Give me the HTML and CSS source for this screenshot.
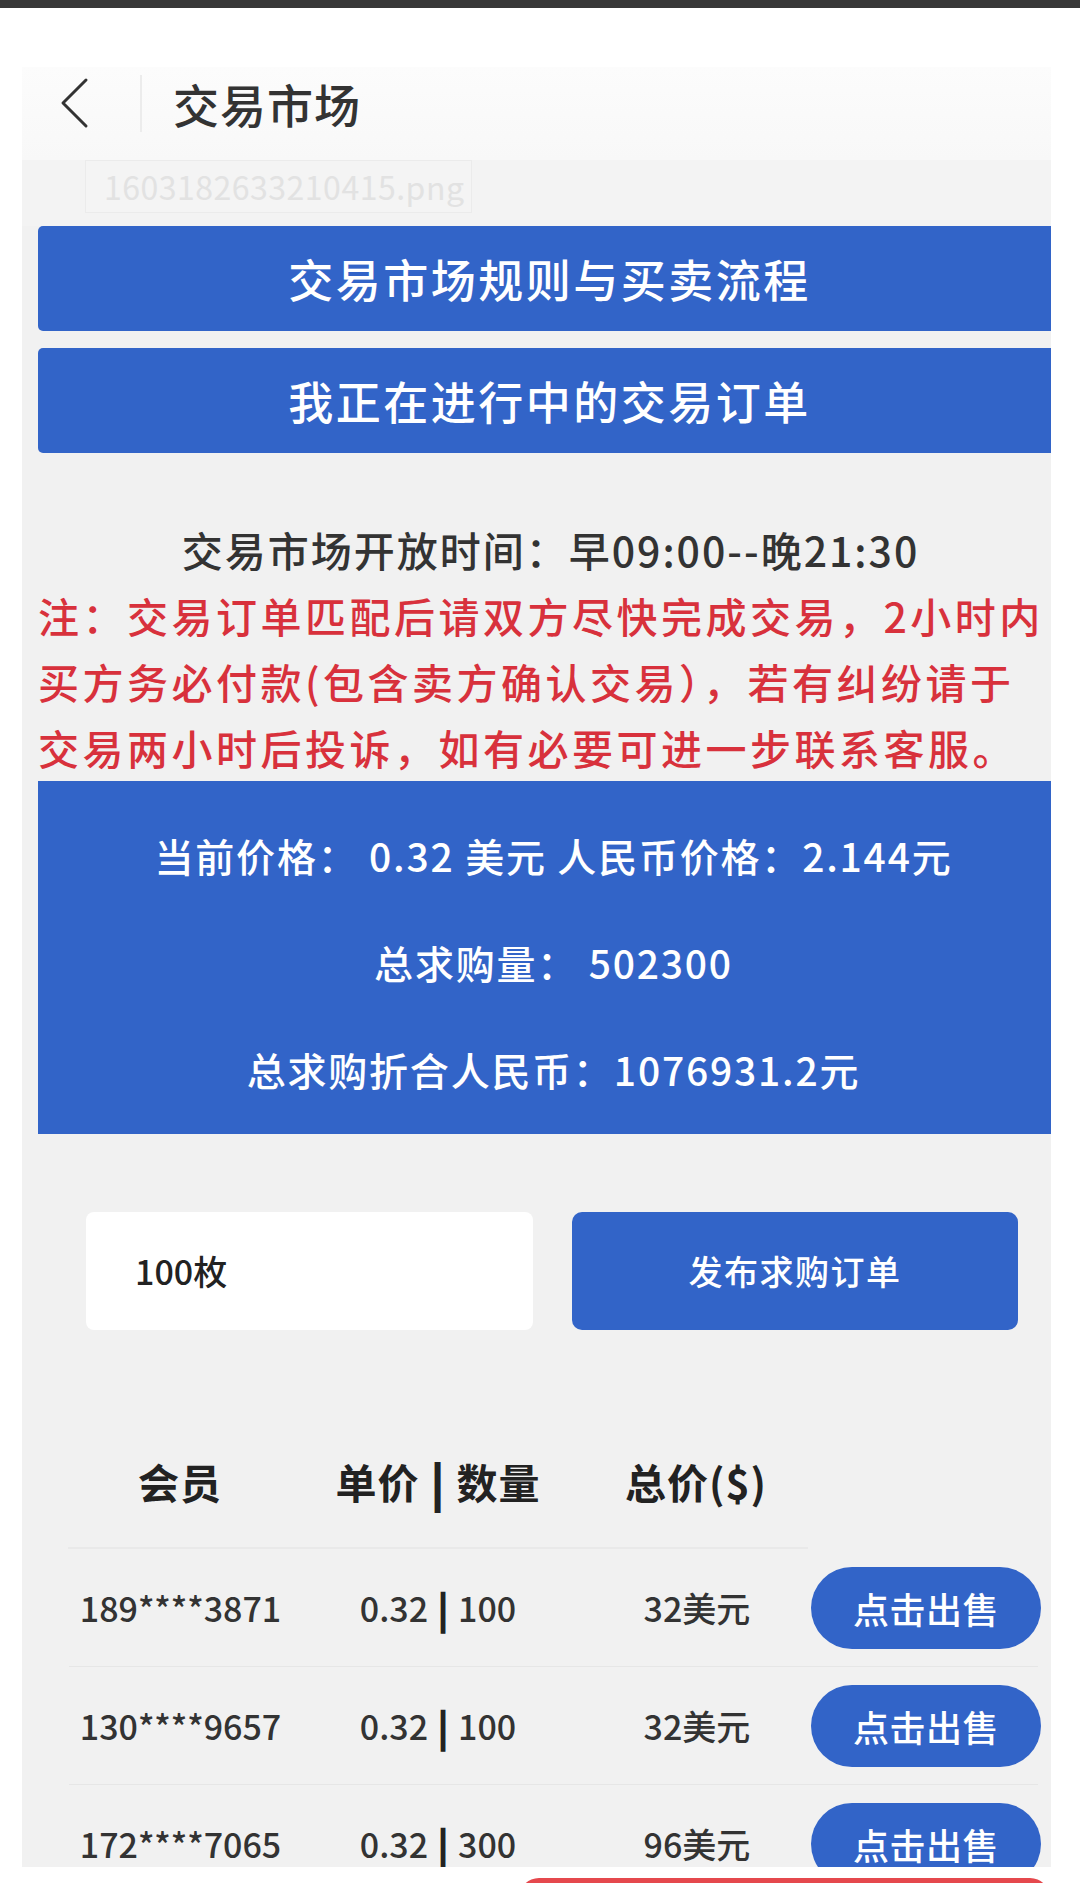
FILE: index.html
```html
<!DOCTYPE html>
<html lang="zh-CN">
<head>
<meta charset="utf-8">
<title>交易市场</title>
<link rel="stylesheet" href="styles.css">
</head>
<body>
<div class="topbar"></div>
<div class="page">
  <header class="nav">
    <svg class="nav-back" width="30" height="52" viewBox="0 0 30 52"><polyline points="26,3 3,26 26,49" fill="none" stroke="#333" stroke-width="3" stroke-linecap="round" stroke-linejoin="round"/></svg>
    <span class="nav-sep"></span>
    <h1 class="nav-title">交易市场</h1>
  </header>
  <div class="filebar"><span class="filename">1603182633210415.png</span></div>
  <main class="content">
    <div class="wide-btns">
      <a class="btn-wide">交易市场规则与买卖流程</a>
      <a class="btn-wide">我正在进行中的交易订单</a>
    </div>
    <p class="open-time">交易市场开放时间：早09:00--晚21:30</p>
    <p class="notice">注：交易订单匹配后请双方尽快完成交易，2小时内<br>买方务必付款(包含卖方确认交易），若有纠纷请于<br>交易两小时后投诉，如有必要可进一步联系客服。</p>
    <div class="stats">
      <p>当前价格： 0.32 美元 人民币价格：2.144元</p>
      <p>总求购量： 502300</p>
      <p>总求购折合人民币：1076931.2元</p>
    </div>
    <div class="order-form">
      <div class="qty">100枚</div>
      <a class="btn-post">发布求购订单</a>
    </div>
    <div class="table">
      <div class="thead">
        <span>会员</span>
        <span>单价<b class="bar">|</b>数量</span>
        <span>总价($)</span>
      </div>
      <div class="trow">
        <span>189****3871</span>
        <span>0.32<b class="bar">|</b>100</span>
        <span>32美元</span>
        <a class="btn-sell">点击出售</a>
      </div>
      <div class="trow">
        <span>130****9657</span>
        <span>0.32<b class="bar">|</b>100</span>
        <span>32美元</span>
        <a class="btn-sell">点击出售</a>
      </div>
      <div class="trow">
        <span>172****7065</span>
        <span>0.32<b class="bar">|</b>300</span>
        <span>96美元</span>
        <a class="btn-sell">点击出售</a>
      </div>
    </div>
  </main>
</div>
<div class="footer"><span class="red-btn"></span></div>
</body>
</html>
```
FILE: styles.css
```css
* { box-sizing: border-box; }
html, body { margin: 0; padding: 0; }
body {
  background: #fff;
  font-family: "Noto Sans CJK SC", "Noto Sans", sans-serif;
  color: #333;
  width: 1080px;
  height: 1883px;
  overflow: hidden;
}
.topbar { height: 8px; background: #383838; }
.page {
  margin: 59px 29px 0 22px;
  height: 1800px;
  background: #f1f1f1;
  overflow: hidden;
}
.nav {
  height: 93px;
  background: linear-gradient(#fcfcfc, #f8f8f8);
  display: flex;
  align-items: center;
  padding: 0 0 21px 38px;
}
.nav-back { display: block; }
.nav-sep {
  width: 2px;
  height: 57px;
  background: #ececec;
  margin-left: 50px;
}
.nav-title {
  margin: 0 0 0 31px;
  font-size: 46px;
  font-weight: 500;
  letter-spacing: 1px;
  color: #333;
  line-height: 1;
}
.filebar {
  height: 66px;
  padding-left: 63px;
  background: #f3f3f3;
}
.filename {
  display: inline-block;
  width: 387px;
  height: 53px;
  border: 1px solid #ebebeb;
  background: #f4f4f4;
  color: #e2e2e2;
  font-size: 32px;
  line-height: 51px;
  padding-left: 18px;
  letter-spacing: 0.5px;
}
.content { padding-left: 16px; }
.wide-btns { display: flex; flex-direction: column; gap: 17px; }
.btn-wide {
  display: block;
  height: 105px;
  background: #3264c8;
  border-radius: 5px 0 0 5px;
  color: #fff;
  font-size: 45px;
  font-weight: 500;
  letter-spacing: 2.5px;
  line-height: 105px;
  text-align: center;
  padding-left: 10px;
}
.open-time {
  margin: 63px 0 0;
  line-height: 66px;
  font-size: 41px;
  font-weight: 500;
  letter-spacing: 2px;
  text-align: center;
  padding-left: 12px;
  color: #333;
}
.notice {
  margin: 0;
  line-height: 66px;
  font-size: 41px;
  font-weight: 500;
  letter-spacing: 3.5px;
  color: #d8313c;
}
.stats {
  margin-top: 1px;
  background: #3264c8;
  padding: 21px 0 11px 18px;
  color: #fff;
  text-align: center;
  font-size: 39px;
  font-weight: 500;
  letter-spacing: 1.8px;
}
.stats p { margin: 0; line-height: 107px; }
.order-form {
  margin-top: 78px;
  height: 118px;
  display: flex;
  gap: 39px;
  padding-left: 48px;
}
.qty {
  width: 447px;
  background: #fff;
  border-radius: 8px;
  font-size: 34px;
  font-weight: 500;
  line-height: 118px;
  padding-left: 49px;
  color: #222;
}
.btn-post {
  width: 446px;
  background: #3264c8;
  border-radius: 10px;
  color: #fff;
  font-size: 34px;
  font-weight: 500;
  letter-spacing: 1.5px;
  line-height: 118px;
  text-align: center;
}
.table { margin: 111px 0 0 30px; }
.thead {
  width: 740px;
  display: grid;
  grid-template-columns: 224px 292px 224px;
  border-bottom: 2px solid #e9e9e9;
  padding-bottom: 26px;
  font-size: 41px;
  font-weight: 700;
  letter-spacing: 1px;
  line-height: 80px;
  color: #222;
  text-align: center;
}
.bar {
  display: inline-block;
  font-weight: 700;
  line-height: 1;
  -webkit-text-stroke: 2px currentColor;
  transform: scaleY(1.05);
}
.thead .bar { margin: 0 12px; }
.trow {
  width: 969px;
  margin-left: 1px;
  height: 118px;
  display: grid;
  grid-template-columns: 223px 292px 226px 227px;
  align-items: center;
  border-bottom: 1px solid #e6e6e6;
  text-align: center;
  font-size: 34px;
  font-weight: 500;
  line-height: 48px;
  color: #333;
}
.trow .bar { margin: 0 10px; color: #222; -webkit-text-stroke: 1.5px currentColor; }
.btn-sell {
  display: block;
  height: 82px;
  margin-left: 1px;
  width: 230px;
  border-radius: 41px;
  background: #3264c8;
  color: #fff;
  font-size: 36px;
  font-weight: 500;
  letter-spacing: 0.5px;
  line-height: 82px;
  text-align: center;
}
.footer { padding: 11px 0 0 519px; }
.red-btn {
  display: block;
  width: 531px;
  height: 40px;
  border-radius: 20px;
  background: #e5484d;
}
```
